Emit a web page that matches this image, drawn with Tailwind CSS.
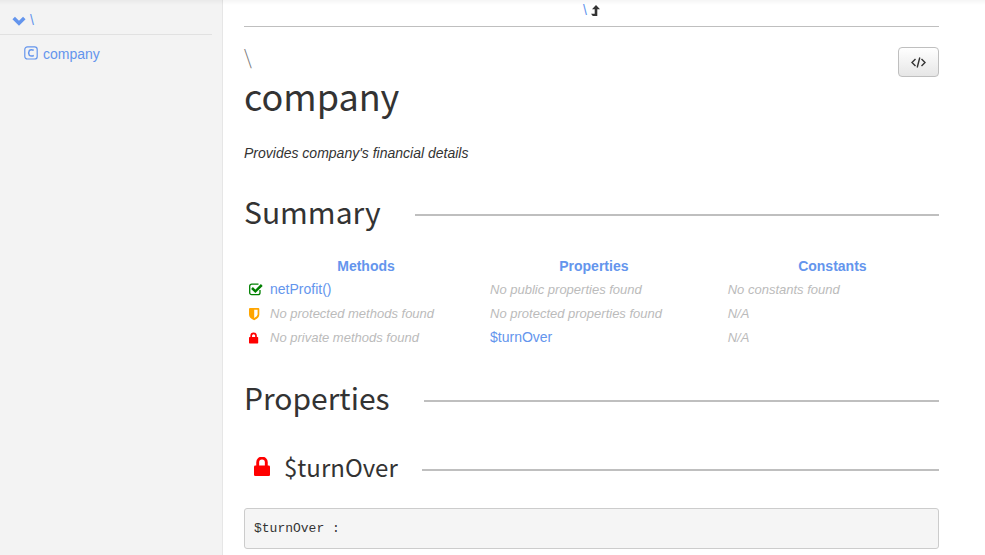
<!DOCTYPE html>
<html lang="en">
<head>
<meta charset="utf-8">
<title>\company</title>
<meta name="viewport" content="width=device-width, initial-scale=1">
<script src="https://cdn.jsdelivr.net/npm/@tailwindcss/browser@4"></script>
</head>
<body class="flex min-h-screen bg-white font-['Liberation_Sans',Arial,sans-serif] text-sm leading-5 text-[#333]">
<div class="pointer-events-none fixed inset-x-0 top-0 h-[5px] bg-linear-to-b from-black/4 to-transparent"></div>

<aside class="w-[223px] shrink-0 border-r border-[#e6e6e6] bg-[#f3f3f3] pt-[10px]">
  <nav aria-label="Namespaces" class="text-[#6495ed]">
    <div class="mr-[10px] flex h-[25px] items-start border-b border-[#e1e1e1] pl-[12px]">
      <button type="button" aria-label="Toggle namespace" class="mt-[5px] mr-[4px]">
        <svg class="block h-[11px] w-[14px]" viewBox="0 0 14 11" fill="none" stroke="currentColor" stroke-width="3.6"><path d="M1.700 3 7 8.200l5.300-5.200"/></svg>
      </button>
      <a href="#">\</a>
    </div>
    <a href="#company" class="mt-[9px] ml-[24px] flex items-start">
      <svg class="mt-[2px] mr-[5px] block h-[14px] w-[14px]" viewBox="0 0 14 14" fill="none" stroke="currentColor"><rect x=".8" y=".8" width="12.400" height="12.200" rx="2.600" stroke-width="1.200"/><path d="M9.700 4.200Q7 3 5.400 4.400 4 6.800 5.300 9.200 7 10.800 9.800 9.500" stroke-width="1.500"/></svg>
      company
    </a>
  </nav>
</aside>

<main class="min-w-0 flex-1 pr-[46px] pl-[21px]">
  <div class="flex h-[27px] justify-center border-b border-[#bfbfbf]">
    <a href="#" class="mr-[4px] text-[#6495ed]">\</a>
    <svg class="mt-[5px] block h-[11px] w-[9px]" viewBox="0 0 9 11" fill="#333"><path d="M5 0 9 4.200H6.300V11H1.800L0 8.700h3.700V4.200H1Z"/></svg>
  </div>

  <header id="company" class="mt-[20px] flex items-start justify-between">
    <h1 class="font-['Noto_Sans_CJK_JP',sans-serif] text-4xl leading-[42px]">
      <small class="block text-xl leading-5 font-light text-[#777]">\</small>
      <span class="block pt-[7px]">company</span>
    </h1>
    <button type="button" aria-label="View source" class="flex h-[30px] w-[41px] items-center justify-center rounded-sm border border-[#bfbfbf] bg-linear-to-b from-white to-[#e6e6e6]">
      <svg class="block h-[11px] w-[15px]" viewBox="0 0 15 11" fill="none" stroke="#333" stroke-width="1.400"><path d="M4.500 2 1 5.500 4.500 9M10.500 2 14 5.500 10.500 9M8.800.5 6.200 10.500"/></svg>
    </button>
  </header>

  <p class="mt-[27px] italic">Provides company's financial details</p>

  <section>
    <div class="mt-[28px] flex items-center gap-[34px]">
      <h2 class="font-['Noto_Sans_CJK_JP',sans-serif] text-3xl leading-10">Summary</h2>
      <span class="mt-[8px] h-[2px] flex-1 bg-[#bfbfbf]"></span>
    </div>

    <table class="mt-[25px] w-full table-fixed">
      <colgroup><col class="w-[35.4%]"><col class="w-[34.2%]"><col></colgroup>
      <thead>
        <tr class="text-[#6495ed]"><th class="pr-[2px] pb-px">Methods</th><th class="pr-[30px] pb-px">Properties</th><th class="pr-[2px] pb-px">Constants</th></tr>
      </thead>
      <tbody class="text-[13px] text-[#bbb] italic">
        <tr class="h-[24px]">
          <td><div class="flex items-center pl-[5px]">
            <svg class="mr-[7px] block h-[13px] w-[14px]" viewBox="0 0 14 13" fill="none" stroke="green"><path d="M11 7V9.700a2 2 0 0 1-2 2H2.700a2 2 0 0 1-2-2V3.200a2 2 0 0 1 2-2H9.500" stroke-width="1.300"/><path d="m3 5 3.400 3.300 6.400-6.300" stroke-width="2.500"/></svg>
            <a href="#netProfit" class="text-sm text-[#6495ed] not-italic">netProfit()</a></div></td>
          <td class="pt-[2px]">No public properties found</td><td class="pt-[2px]">No constants found</td>
        </tr>
        <tr class="h-[24px]">
          <td class="pt-[2px]"><div class="flex items-center pl-[5px]">
            <svg class="mr-[7px] block h-[13px] w-[14px]" viewBox="0 0 14 13" fill="orange"><path fill-rule="evenodd" d="M0 1Q0 0 1 0h8.300q1 0 1 1V6.500q0 3.500-5.150 5.700Q0 10 0 6.500ZM5.200 1.700V10Q8.600 8.200 8.600 6.500V1.700Z"/></svg>
            No protected methods found</div></td>
          <td class="pt-[2px]">No protected properties found</td><td class="pt-[2px]">N/A</td>
        </tr>
        <tr class="h-[24px]">
          <td class="pt-[2px]"><div class="flex items-center pl-[5px]">
            <svg class="mr-[7px] block h-[13px] w-[14px]" viewBox="0 0 14 13" fill="red"><rect y="5" width="9.200" height="6.500" rx=".7"/><path d="M2.200 6V3.700a2.400 2.400 0 0 1 4.800 0v2" fill="none" stroke="red" stroke-width="1.700"/></svg>
            No private methods found</div></td>
          <td><a href="#turnOver" class="text-sm text-[#6495ed] not-italic">$turnOver</a></td><td class="pt-[2px]">N/A</td>
        </tr>
      </tbody>
    </table>
  </section>

  <section>
    <div class="mt-[28px] flex items-center gap-[34px]">
      <h2 class="font-['Noto_Sans_CJK_JP',sans-serif] text-3xl leading-10">Properties</h2>
      <span class="mt-[8px] h-[2px] flex-1 bg-[#bfbfbf]"></span>
    </div>

    <article id="turnOver">
      <div class="mt-[30px] flex items-center gap-[24px]">
        <h3 class="flex items-center pl-[10px] font-['Noto_Sans_CJK_JP',sans-serif] text-2xl leading-10">
          <svg class="mr-[14px] block h-[20px] w-[16px]" viewBox="0 0 16 20" fill="red"><rect y="8.500" width="16" height="10.500" rx="1.300"/><path d="M3.700 10V5.300a4.300 4.300 0 0 1 8.600 0V10" fill="none" stroke="red" stroke-width="2.900"/></svg>
          $turnOver
        </h3>
        <span class="mt-[5px] h-[2px] flex-1 bg-[#bfbfbf]"></span>
      </div>
      <pre class="mt-[21px] rounded-[3px] border border-[#ccc] bg-[#f5f5f5] px-[9px] py-[9px] font-['Liberation_Mono',monospace] text-[13px] leading-[21px]">$turnOver :</pre>
    </article>
  </section>
</main>
</body>
</html>
